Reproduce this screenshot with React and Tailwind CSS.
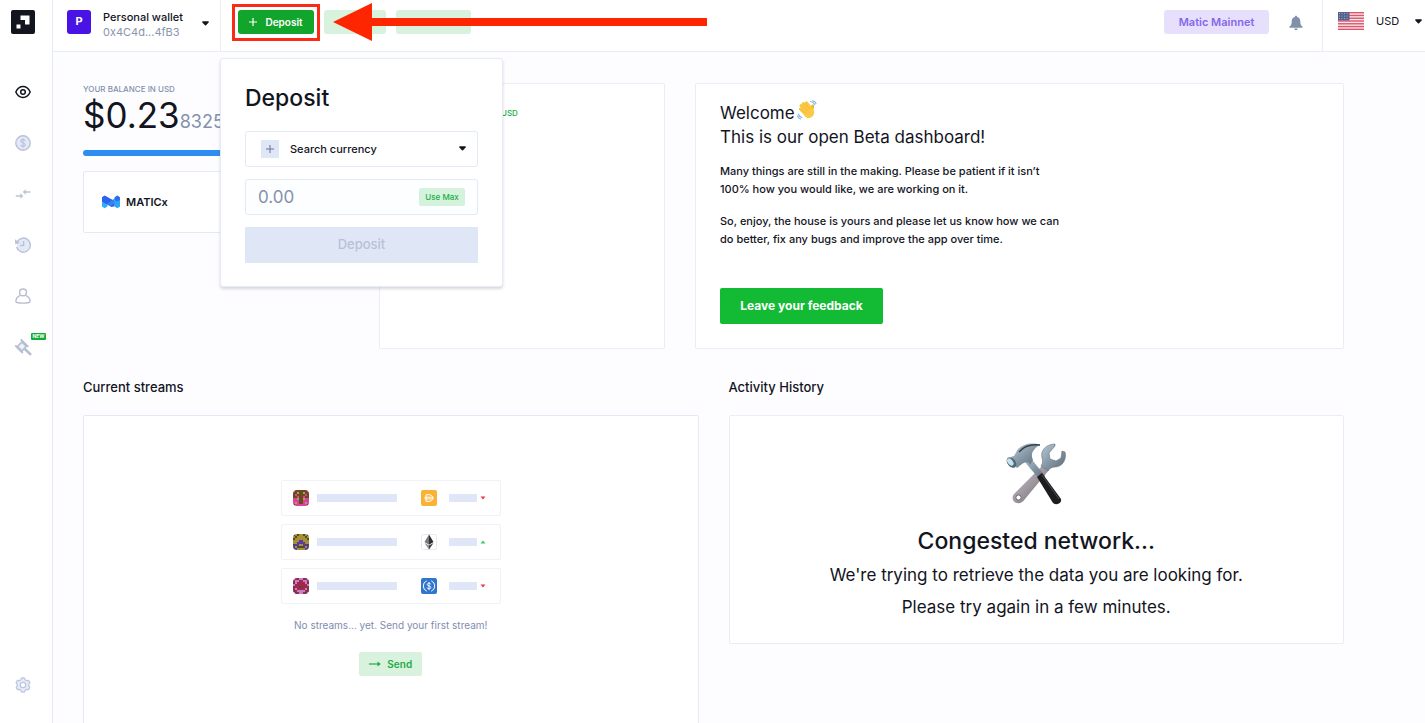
import { useState } from "react";

const AVATARS = [
  {
    colors: { a: "#6b4a1e", b: "#e0409a", c: "#8fae6a" },
    rows: ["baaaaaab", "aacaacaa", "abaaaaba", "aabaabaa", "bbcaacbb", "bbbaabbb", "bcbaabcb", "abbbbbba"],
  },
  {
    colors: { a: "#a8902f", b: "#5a3ba4", c: "#4c4a3c" },
    rows: ["cacaacac", "acaaaaca", "caaaaaac", "aaabbaaa", "aabbbbaa", "cbbaabbc", "baccccab", "cbaaaabc"],
  },
  {
    colors: { a: "#a3264f", b: "#c97fc4", c: "#6b3a48" },
    rows: ["bacbbcab", "abbaabba", "cbaaaabc", "baaaaaab", "caaccaac", "abaaaaba", "cabbbbac", "bcabbacb"],
  },
];

const STREAMS = [
  { avatar: AVATARS[0], token: "dai", up: false },
  { avatar: AVATARS[1], token: "eth", up: true },
  { avatar: AVATARS[2], token: "usdc", up: false },
];

function Caret({ className = "" }) {
  return (
    <svg viewBox="0 0 8 5" className={`w-[7px] h-[5px] ${className}`} fill="currentColor" aria-hidden="true">
      <path d="M1 0h6c.8 0 1.1.8.6 1.3L4.6 4.5a.8.8 0 0 1-1.2 0L.4 1.3C-.1.8.2 0 1 0Z" />
    </svg>
  );
}

function Logo() {
  return (
    <svg viewBox="0 0 24 24" className="w-6 h-6" aria-hidden="true">
      <rect width="24" height="24" rx="2" fill="#12141e" />
      <path d="M9.5 5.500h9v9h-4.500v-4.500h-4.500z" fill="#fff" />
      <rect x="5.500" y="14.500" width="4" height="4" fill="#fff" />
    </svg>
  );
}

function EyeIcon() {
  return (
    <svg viewBox="0 0 16 16" className="w-4 h-4" fill="none" stroke="#12141e" strokeWidth="1.500" aria-hidden="true">
      <path d="M.8 8C2.600 4.200 5 2.500 8 2.500s5.400 1.700 7.200 5.500c-1.800 3.800-4.200 5.500-7.200 5.500S2.600 11.800.8 8Z" strokeLinejoin="round" />
      <circle cx="8" cy="8" r="2.300" />
    </svg>
  );
}

function DollarIcon() {
  return (
    <svg viewBox="0 0 16 16" className="w-4 h-4" fill="none" stroke="#b9c2da" aria-hidden="true">
      <circle cx="8" cy="8" r="7.200" fill="#e3e9f7" strokeWidth="1.400" />
      <path d="M10.200 6c-.3-1-1.100-1.400-2.200-1.400-1.300 0-2.200.6-2.200 1.600 0 2.300 4.500 1.200 4.500 3.600 0 1-.9 1.600-2.300 1.600-1.200 0-2.100-.5-2.400-1.500M8 3.300v9.400" strokeWidth="1.100" />
    </svg>
  );
}

function SwapIcon() {
  return (
    <svg viewBox="0 0 16 16" className="w-4 h-4" fill="none" stroke="#bcc3d4" strokeWidth="1.300" aria-hidden="true">
      <path d="M.8 10h6M15.500 6h-6" />
      <path d="M5.300 7.300 8.300 10l-3 2.700zM10.700 3.300 7.700 6l3 2.700z" fill="#bcc3d4" stroke="none" />
    </svg>
  );
}

function HistoryIcon() {
  return (
    <svg viewBox="0 0 16 16" className="w-4 h-4" fill="none" stroke="#b9c2da" strokeWidth="1.500" aria-hidden="true">
      <circle cx="8.400" cy="8" r="6.500" fill="#e3e9f7" stroke="none" />
      <path d="M2.300 4.600A7 7 0 1 1 1.600 10M8.600 4v4.500H5" />
      <path d="M0 2.200 4.800 5.800.2 7.600z" fill="#b9c2da" stroke="none" />
    </svg>
  );
}

function UserIcon() {
  return (
    <svg viewBox="0 0 16 16" className="w-4 h-4" fill="none" stroke="#b7bfd0" strokeWidth="1.400" aria-hidden="true">
      <circle cx="8" cy="4.400" r="3.400" />
      <path d="M5.300 7.400C2.400 8.600 1 10.500.9 13.200c0 .8.400 1.200 1 1.300 4 .8 8.200.8 12.200 0 .6-.1 1-.5 1-1.300-.1-2.700-1.500-4.600-4.400-5.800" />
    </svg>
  );
}

function GavelIcon() {
  return (
    <svg viewBox="0 0 18 18" className="w-[18px] h-[18px]" fill="none" stroke="#b7bfd0" aria-hidden="true">
      <path d="M3.500 8.500 8 3.800l4.300 4.500L8 13z" fill="#eef1f9" strokeWidth="1.700" />
      <path d="m7.300 1.800 6.500 6.500M1.800 8l6.500 6.500" strokeWidth="1.900" strokeLinecap="round" />
      <path d="m10.800 11 5.400 5" strokeWidth="2.600" strokeLinecap="round" />
    </svg>
  );
}

function GearIcon() {
  return (
    <svg viewBox="0 0 16 16" className="w-4 h-4" fill="#e6ebf7" stroke="#bac5df" strokeWidth="1.200" strokeLinejoin="round" aria-hidden="true">
      <path d="m8 .8 1.600.4.7 1.700 1.200.7 1.900-.3 1.100 1.300.3 1.300-1.100 1.400v1.400l1.100 1.400-.3 1.300-1.100 1.300-1.900-.3-1.200.7-.7 1.700-1.600.4-1.600-.4-.7-1.700-1.200-.7-1.900.3-1.100-1.300-.3-1.300 1.100-1.400V7.300L1.200 5.900l.3-1.300 1.100-1.300 1.900.3 1.200-.7.7-1.700z" />
      <circle cx="8" cy="8" r="2.700" fill="#fff" />
    </svg>
  );
}

function BellIcon() {
  return (
    <svg viewBox="0 0 14 16" className="w-[14px] h-4" fill="#8090ab" aria-hidden="true">
      <path d="M7 .8c.7 0 1.100.4 1.100 1.100 2.100.5 3.200 2.100 3.200 4.300 0 2.900.6 4.300 2.100 5.300.4.300.3 1.300-.4 1.300H1c-.7 0-.8-1-.4-1.300 1.500-1 2.100-2.400 2.100-5.300 0-2.200 1.100-3.800 3.200-4.300C5.900 1.200 6.300.8 7 .8ZM5.300 13.500h3.400c0 1-.7 1.700-1.700 1.700s-1.700-.7-1.700-1.700Z" />
    </svg>
  );
}

function FlagIcon() {
  return (
    <svg viewBox="0 0 26 18" className="w-[26px] h-[18px]" aria-hidden="true">
      <rect width="26" height="18" fill="#f6e9ee" />
      {[0, 1, 2, 3, 4, 5, 6].map((n) => (
        <rect key={n} y={n * 2.77} width="26" height="1.400" fill="#de5468" />
      ))}
      <rect width="11.500" height="8.400" fill="#54608f" />
      {[1.5, 4, 6.5].map((y) =>
        [1.5, 4, 6.5, 9].map((x) => <circle key={`${x}-${y}`} cx={x} cy={y} r=".5" fill="#b9c0dc" />)
      )}
    </svg>
  );
}

function MaticIcon() {
  return (
    <svg viewBox="0 0 18 14" className="w-[18px] h-[14px]" aria-hidden="true">
      <path d="M0 2.500 2.700.8 5.400 2.500v9L2.700 13.300 0 11.500z" fill="#2bb0f7" />
      <path d="M12.600 2.500 15.300.5 18 2.500v9l-2.700 1.800-2.700-1.800z" fill="#28a9f5" />
      <path d="M0 2.300 2.700.5 5.400 2l7.200 4v5.200L9.500 12 0 6.500z" fill="#2b62ee" />
      <path d="M5.400 8.500 12.600 3.500v4.800L8.500 11z" fill="#2f86f4" />
      <path d="m12.600 2.400 2.700-2 2.700 2v2.400l-2.700 1.800-2.700-1.500z" fill="#2f6df0" />
    </svg>
  );
}

function WaveIcon() {
  return (
    <svg viewBox="0 0 20 20" className="inline-block w-5 h-5 ml-[2px] -mt-2" aria-hidden="true">
      <g stroke="#f8c63c" strokeWidth="3" strokeLinecap="round">
        <path d="m4 5.500 6 6.500M6.300 3.500l6 6.500M9.300 2.800l5 6M3.300 9l5 5" />
        <path d="m14.500 11 1.300-5" stroke="#f5b62b" />
      </g>
      <path d="m4.500 10 7.500-5.500 4.700 5.500c1.200 3.500-.3 6.700-3.400 7.800-2.500.8-4.600-.3-6-2.300z" fill="#fbcb45" />
      <path d="m7 7 4 4.500M5 9.500l4 4M9.500 5l3.500 4.500" stroke="#e79f25" strokeWidth=".5" />
      <path d="M13.500 1.500q2.800.3 4.200 3M15.800.7q2.500.8 3.200 3M1.300 14q.8 2.700 3.500 3.500M.5 16q.8 2.500 3 3" fill="none" stroke="#79b4e6" strokeWidth="1.100" strokeLinecap="round" />
    </svg>
  );
}

function ToolsIcon() {
  return (
    <svg viewBox="0 0 60 62" className="w-[60px] h-[62px]" aria-hidden="true">
      <defs>
        <linearGradient id="steel" x1="0" y1="0" x2="1" y2="1">
          <stop offset="0" stopColor="#b9cbd8" />
          <stop offset=".5" stopColor="#8597a5" />
          <stop offset="1" stopColor="#5b6874" />
        </linearGradient>
        <linearGradient id="shank" x1="0" y1="0" x2="1" y2="1">
          <stop offset="0" stopColor="#c6c3ca" />
          <stop offset=".5" stopColor="#9f989f" />
          <stop offset="1" stopColor="#615b61" />
        </linearGradient>
      </defs>
      {/* Wrench */}
      <path d="M36 23 8 51c-3 4-1 8 3 9 3 1 6-1 8-4l24-29z" fill="url(#shank)" />
      <circle cx="12.500" cy="54.500" r="2.600" fill="#fff" stroke="#6b666e" />
      <path d="M49 1C40 1 34 8 36 15c1 3 1 5-1 8l7 5c2-3 4-4 7-4 7 0 12-7 10-15l-3-1-1 7-5 3-6-2-1-6 6-7z" fill="url(#steel)" stroke="#68747e" strokeWidth=".6" />
      {/* Hammer */}
      <path d="m17 17 6-4 16 20-4 5z" fill="url(#steel)" />
      <path d="m31 34 5-4 19 26c1 4-4 7-8 4z" fill="#1d1d1f" />
      <path d="m36 32 17 24" stroke="#4e4e52" strokeWidth="1" />
      <path d="M34 2C26-1 17 1 12 6L8 13c-2 0-3 1-4 3l7 9 5-4c4-3 7-2 8 1l3-5c-2-4-1-8 1-10 2-3 4-4 6-5z" fill="url(#steel)" />
      <path d="M34 2C25 1 18 3 13 9" fill="none" stroke="#34404a" strokeWidth="1.300" />
      <ellipse cx="5.500" cy="19.500" rx="4" ry="6" transform="rotate(-38 5.500 19.500)" fill="#536978" />
      <ellipse cx="4.300" cy="19" rx="2.500" ry="4" transform="rotate(-38 4.300 19)" fill="#c5e2f0" />
    </svg>
  );
}

function Avatar({ data }) {
  return (
    <svg viewBox="0 0 8 8" className="w-4 h-4 rounded-sm" shapeRendering="crispEdges" aria-hidden="true">
      {data.rows.map((row, y) =>
        row.split("").map((c, x) => (
          <rect key={`${x}-${y}`} x={x} y={y} width="1" height="1" fill={data.colors[c]} />
        ))
      )}
    </svg>
  );
}

function TokenIcon({ token }) {
  if (token === "dai") {
    return (
      <svg viewBox="0 0 16 16" className="w-4 h-4" aria-hidden="true">
        <rect width="16" height="16" rx="2" fill="#f9b233" />
        <path d="M5 4.700h3c2.200 0 3.700 1.300 3.700 3.300s-1.500 3.300-3.700 3.300H5zM3.500 7.200h9M3.500 8.900h9" fill="none" stroke="#fff" strokeWidth="1" />
      </svg>
    );
  }
  if (token === "eth") {
    return (
      <svg viewBox="0 0 16 16" className="w-4 h-4" aria-hidden="true">
        <rect x=".5" y=".5" width="15" height="15" rx="2" fill="#fff" stroke="#e6e8ee" />
        <path d="M8 .5 3.500 8 8 10.700z" fill="#77777c" />
        <path d="M8 .5 12.500 8 8 10.700z" fill="#303033" />
        <path d="M3.500 9 8 15.500v-3.900z" fill="#8d8d92" />
        <path d="M12.500 9 8 15.500v-3.900z" fill="#3e3e42" />
      </svg>
    );
  }
  return (
    <svg viewBox="0 0 16 16" className="w-4 h-4" aria-hidden="true">
      <rect width="16" height="16" rx="2" fill="#2f76cc" />
      <g fill="none" stroke="#fff">
        <path d="M5.800 2.800a5.600 5.600 0 0 0 0 10.400M10.200 2.800a5.600 5.600 0 0 1 0 10.400" />
        <path d="M9.800 6.400C9.600 5.600 9 5.200 8 5.200s-1.800.5-1.800 1.300c0 2 3.700.9 3.700 3 0 .8-.8 1.300-1.900 1.300s-1.800-.4-2-1.300M8 4v8" strokeWidth=".9" />
      </g>
    </svg>
  );
}

function Sidebar() {
  const items = [
    { label: "Dashboard", icon: <EyeIcon /> },
    { label: "Balances", icon: <DollarIcon /> },
    { label: "Streams", icon: <SwapIcon /> },
    { label: "History", icon: <HistoryIcon /> },
    { label: "Contacts", icon: <UserIcon /> },
    { label: "Auctions", icon: <GavelIcon />, isNew: true },
  ];

  return (
    <aside className="w-[53px] shrink-0 bg-white border-r border-[#e4eaf5] flex flex-col pl-[11px] pt-[10px] pb-[26px]">
      <a href="#" aria-label="Home" className="w-6 h-6">
        <Logo />
      </a>
      <nav className="mt-[46px] flex flex-col gap-[27px]">
        {items.map((item) => (
          <a key={item.label} href="#" aria-label={item.label} className="relative w-6 h-6 flex items-center justify-center">
            {item.icon}
            {item.isNew && (
              <span className="absolute left-5 -top-[2px] w-[15px] h-[7px] rounded-[1px] bg-[#12ad35] text-white text-[5px] leading-[7px] font-bold text-center">
                NEW
              </span>
            )}
          </a>
        ))}
      </nav>
      <a href="#" aria-label="Settings" className="mt-auto w-6 h-6 flex items-center justify-center">
        <GearIcon />
      </a>
    </aside>
  );
}

function DepositMenu() {
  const [amount, setAmount] = useState("");

  return (
    <form className="absolute z-20 -left-px top-[58px] w-[283px] rounded-[3px] bg-white border border-[#e6ebf5] shadow-[0_2px_3px_rgba(60,70,110,0.2)] px-6 pt-6 pb-[23px]">
      <h2 className="text-[23px] leading-[30px] font-medium">Deposit</h2>
      <div className="mt-[18px] relative">
        <select aria-label="Currency" className="appearance-none w-full h-9 rounded-[3px] border border-[#e3e9f5] bg-white pl-11 text-[11px] font-medium text-[#12141e]">
          <option>Search currency</option>
        </select>
        <span className="absolute left-4 top-[9px] w-[18px] h-[18px] bg-[#dfe7f6] flex items-center justify-center pointer-events-none">
          <svg viewBox="0 0 8 8" className="w-2 h-2" stroke="#66748f" aria-hidden="true">
            <path d="M4 0v8M0 4h8" />
          </svg>
        </span>
        <Caret className="absolute right-3 top-[15px] pointer-events-none" />
      </div>
      <div className="mt-3 h-9 rounded-[3px] border border-[#e3e9f5] bg-[#fdfeff] flex items-center pl-3 pr-3">
        <input
          aria-label="Amount"
          placeholder="0.00"
          value={amount}
          onChange={(e) => setAmount(e.target.value)}
          className="flex-1 min-w-0 h-full bg-transparent text-[17px] placeholder:text-[#8491ab] outline-none"
        />
        <button type="button" className="w-[46px] h-[18px] rounded-[2px] bg-[#d5f3dc] text-[#22ac43] text-[8px] font-medium">
          Use Max
        </button>
      </div>
      <button type="button" disabled className="mt-3 w-full h-9 bg-[#dfe7f6] text-[#b7c1d8] text-[13px] font-medium">
        Deposit
      </button>
    </form>
  );
}

function Header() {
  return (
    <header className="h-[52px] shrink-0 bg-white border-b border-[#e8edf6] flex">
      <button className="w-[167px] pl-[14px] pr-[11px] pb-1 flex items-center text-left">
        <span className="w-6 h-6 mb-1 rounded-[3px] bg-[#4a13e5] text-white text-[11px] font-bold flex items-center justify-center">P</span>
        <span className="ml-3 flex-1 flex flex-col">
          <span className="text-[11px] leading-4 font-medium">Personal wallet</span>
          <span className="text-[11px] leading-[14px] text-[#8995ac]">0x4C4d...4fB3</span>
        </span>
        <Caret />
      </button>

      <div className="relative border-l border-[#e8edf6] pl-[17px] pt-[10px] flex items-start gap-[10px]">
        <div className="relative">
          <button className="w-[76px] h-6 rounded-[3px] bg-[#12a52c] text-white text-[10px] font-semibold flex items-center justify-center gap-2">
            <svg viewBox="0 0 8 8" className="w-2 h-2" stroke="currentColor" strokeWidth="1.200" aria-hidden="true">
              <path d="M4 0v8M0 4h8" />
            </svg>
            Deposit
          </button>
          <span className="absolute -inset-x-[6px] -top-[6px] -bottom-[7px] border-[3px] border-[#fb2a17] pointer-events-none" />
          <svg viewBox="0 0 375 38" className="absolute z-10 left-[95px] -top-[7px] w-[375px] max-w-none h-[38px] pointer-events-none" fill="#fe2600" aria-hidden="true">
            <path d="M0 19 39 0v15h335v8H39v15z" />
          </svg>
        </div>
        <button className="w-[62px] h-6 rounded-[3px] bg-[#d9f2de] text-[#25a544] text-[10px] font-semibold pl-4">Send</button>
        <button className="w-[75px] h-6 rounded-[3px] bg-[#d9f2de] text-[#25a544] text-[10px] font-semibold pl-4">Receive</button>
        <DepositMenu />
      </div>

      <div className="ml-auto flex items-start pt-[10px]">
        <button className="w-[105px] h-6 rounded-[3px] bg-[#e6e0fc] text-[#8567ea] text-[11px] font-semibold">Matic Mainnet</button>
        <button aria-label="Notifications" className="ml-5 mr-[19px] h-[26px] flex items-center">
          <BellIcon />
        </button>
      </div>
      <div className="w-[103px] border-l border-[#e8edf6] pl-[15px] pr-[3px] pb-[9px] flex items-center">
        <FlagIcon />
        <select aria-label="Display currency" className="appearance-none ml-3 flex-1 min-w-0 text-[11px]">
          <option>USD</option>
        </select>
        <Caret />
      </div>
    </header>
  );
}

function BalanceSection() {
  return (
    <section className="flex gap-[30px]">
      <div className="w-[266px]">
        <h2 className="text-[8px] leading-3 font-medium text-[#8491ab]">YOUR BALANCE IN USD</h2>
        <p className="leading-10 text-[35px] text-[#12141e]">
          $0.23<span className="text-lg text-[#8491ab]">8325</span>
        </p>
        <div className="mt-[14px] h-[6px] rounded-full bg-[#2d8df0]" />
        <div className="mt-[15px] h-[62px] rounded-[2px] border border-[#e3e9f5] bg-white flex items-center gap-[6px] pl-[18px] text-[11px] font-semibold">
          <MaticIcon />
          MATICx
        </div>
      </div>
      <div className="flex-1 h-[266px] rounded-[2px] border border-[#e8edf6] bg-white pl-[121px] pt-[23px] text-[8px] leading-3 font-medium text-[#22ac43]">
        USD
      </div>
    </section>
  );
}

function WelcomeSection() {
  return (
    <section className="h-[266px] rounded-[2px] border border-[#e8edf6] bg-white px-6 pt-[17px]">
      <h2 className="text-[17px] leading-6">
        Welcome
        <WaveIcon />
        <br />
        This is our open Beta dashboard!
      </h2>
      <p className="mt-[13px] text-[11px] leading-[18px] font-medium">
        Many things are still in the making. Please be patient if it isn’t
        <br />
        100% how you would like, we are working on it.
      </p>
      <p className="mt-[14px] text-[11px] leading-[18px] font-medium">
        So, enjoy, the house is yours and please let us know how we can
        <br />
        do better, fix any bugs and improve the app over time.
      </p>
      <button className="mt-10 w-[163px] h-9 rounded-[2px] bg-[#13ba34] text-white text-xs font-bold">Leave your feedback</button>
    </section>
  );
}

function StreamsSection() {
  return (
    <section>
      <h2 className="text-[13px] leading-5 font-medium">Current streams</h2>
      <div className="mt-[18px] h-[340px] rounded-[2px] border border-[#e3e9f5] bg-white flex flex-col items-center pt-16">
        <ul className="flex flex-col gap-2">
          {STREAMS.map((stream) => (
            <li key={stream.token} className="w-[220px] h-9 rounded-[2px] border border-[#f0f2f8] flex items-center pl-[11px]">
              <Avatar data={stream.avatar} />
              <span className="ml-2 w-20 h-2 bg-[#dfe6f8]" />
              <span className="ml-6">
                <TokenIcon token={stream.token} />
              </span>
              <span className="ml-3 w-7 h-2 bg-[#dfe6f8]" />
              <svg viewBox="0 0 6 4" className="ml-[3px] w-[6px] h-1" aria-hidden="true">
                {stream.up ? <path d="M3 .5 5.500 3.500h-5z" fill="#3fca5c" /> : <path d="M.5.5h5L3 3.500z" fill="#ee3553" />}
              </svg>
            </li>
          ))}
        </ul>
        <p className="mt-[13px] text-[10px] leading-4 text-[#7f8caf]">No streams... yet. Send your first stream!</p>
        <button className="mt-[19px] w-[63px] h-6 rounded-[2px] bg-[#d9f2de] text-[#23aa45] text-[10px] font-semibold flex items-center justify-center gap-[6px]">
          <svg viewBox="0 0 12 6" className="w-3 h-[6px]" aria-hidden="true">
            <path d="M0 3h9" stroke="currentColor" strokeWidth="1.200" />
            <path d="m8.500.5 3.300 2.500-3.300 2.500z" fill="currentColor" />
          </svg>
          Send
        </button>
      </div>
    </section>
  );
}

function ActivitySection() {
  return (
    <section>
      <h2 className="text-[13px] leading-5 font-medium">Activity History</h2>
      <div className="mt-[18px] h-[229px] rounded-[2px] border border-[#e8edf6] bg-white flex flex-col items-center pt-[27px] text-center">
        <ToolsIcon />
        <h3 className="mt-5 text-[23px] leading-8 font-medium">Congested network...</h3>
        <p className="mt-[2px] text-[17px] leading-8">
          We're trying to retrieve the data you are looking for.
          <br />
          Please try again in a few minutes.
        </p>
      </div>
    </section>
  );
}

function App() {
  return (
    <div className="h-screen overflow-hidden flex bg-[#fdfdff] text-[#12141e] font-['Inter',sans-serif]">
      <Sidebar />
      <div className="flex-1 min-w-0 flex flex-col">
        <Header />
        <main className="pl-[30px] pr-[81px] pt-[31px]">
          <div className="grid grid-cols-[582fr_649fr] gap-[30px]">
            <BalanceSection />
            <WelcomeSection />
          </div>
          <div className="mt-7 grid grid-cols-2 gap-[30px]">
            <StreamsSection />
            <ActivitySection />
          </div>
        </main>
      </div>
    </div>
  );
}

export default App;
